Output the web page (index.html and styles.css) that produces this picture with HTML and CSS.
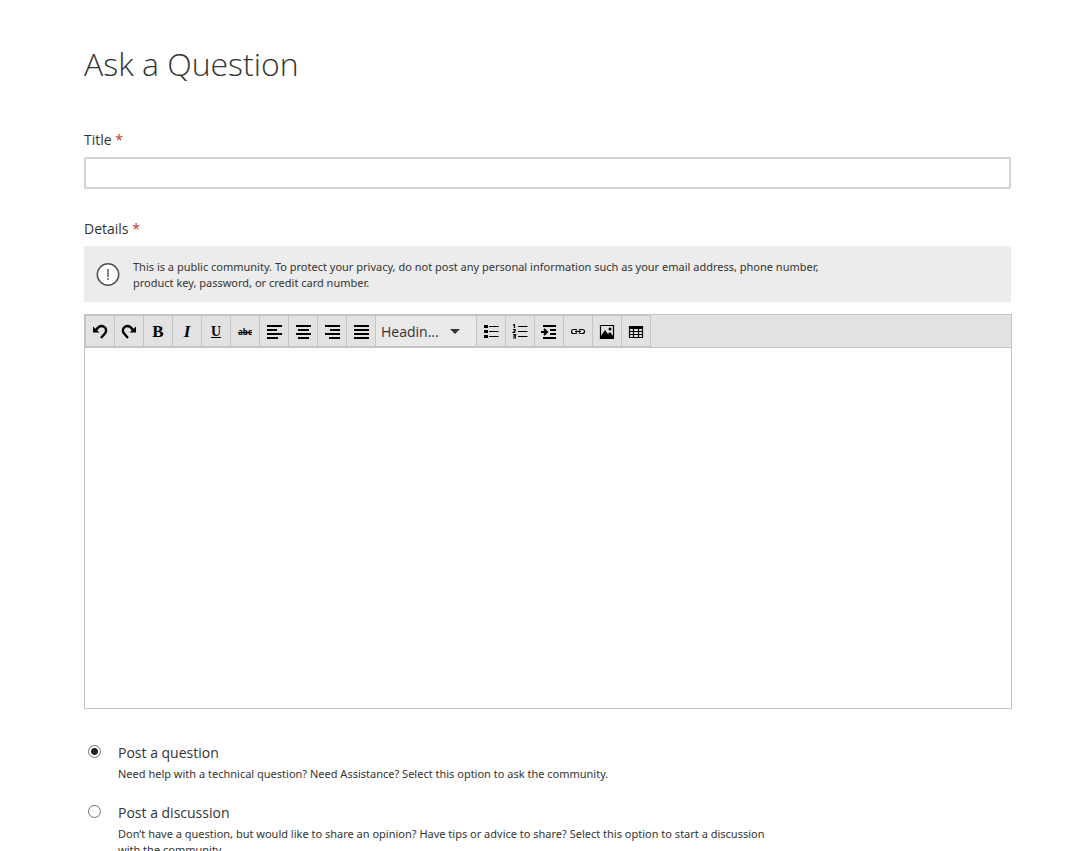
FILE: index.html
```html
<!DOCTYPE html>
<html lang="en">
<head>
    <meta charset="UTF-8">
    <meta name="viewport" content="width=device-width, initial-scale=1.0">
    <title>Ask a Question</title>
    <link rel="stylesheet" href="styles.css">
</head>
<body>
  <main class="page">
    <h1>Ask a Question</h1>
    <form>
      <div class="field">
        <label for="title">Title <span class="required">*</span></label>
        <input type="text" id="title" class="title-input" required>
      </div>
      <div class="field">
        <label for="details">Details <span class="required">*</span></label>
        <div class="notice">
          <svg class="notice-icon" viewBox="0 0 24 24" width="24" height="24">
            <circle cx="12" cy="11.5" r="10.700" fill="#fff" stroke="#505050" stroke-width="1.5"/>
            <path d="M12 6v8M12 15v2" fill="none" stroke="#444" stroke-width="1.300"/>
          </svg>
          <p>This is a public community. To protect your privacy, do not post any personal information such as your email address, phone number, product key, password, or credit card number.</p>
        </div>
        <div class="editor">
          <div class="toolbar">
            <button type="button" class="tool" aria-label="Undo">
              <svg viewBox="0 0 16 16"><path d="M4 6C6.500 2.500 9.500 1.300 12 2.700C14.600 4.300 14.700 7.500 12.700 9.800L9 14" fill="none" stroke="#000" stroke-width="2.300"/><path d="M1 2.500V8.500H7.500z"/></svg>
            </button>
            <button type="button" class="tool" aria-label="Redo">
              <svg viewBox="0 0 16 16"><path d="M12 6C9.500 2.500 6.500 1.300 4 2.700C1.400 4.300 1.300 7.500 3.300 9.800L7 14" fill="none" stroke="#000" stroke-width="2.300"/><path d="M15 2.500V8.500H8.500z"/></svg>
            </button>
            <button type="button" class="tool bold">B</button>
            <button type="button" class="tool italic">I</button>
            <button type="button" class="tool underline">U</button>
            <button type="button" class="tool strike">abc</button>
            <button type="button" class="tool" aria-label="Align left">
              <svg viewBox="0 0 16 16"><path d="M1 2h15M1 6h10M1 10h15M1 14h11" stroke="#000" stroke-width="2"/></svg>
            </button>
            <button type="button" class="tool" aria-label="Align center">
              <svg viewBox="0 0 16 16"><path d="M1 2h15M3 6h11M1 10h15M3 14h11" stroke="#000" stroke-width="2"/></svg>
            </button>
            <button type="button" class="tool" aria-label="Align right">
              <svg viewBox="0 0 16 16"><path d="M1 2h15M6 6h10M1 10h15M5 14h11" stroke="#000" stroke-width="2"/></svg>
            </button>
            <button type="button" class="tool" aria-label="Justify">
              <svg viewBox="0 0 16 16"><path d="M1 2h15M1 6h15M1 10h15M1 14h15" stroke="#000" stroke-width="2"/></svg>
            </button>
            <div class="format">
              <select aria-label="Format">
                <option>Headin...</option>
                <option>Paragraph</option>
              </select>
              <svg class="arrow" viewBox="0 0 10 5" width="10" height="5"><path d="M0 0h10L5 5z" fill="#333"/></svg>
            </div>
            <button type="button" class="tool" aria-label="Bulleted list">
              <svg viewBox="0 0 16 16"><path d="M1 1h4v3H1zM1 6h4v3H1zM1 11h4v3H1z"/><path d="M6 2.500h9.500M6 7.500h9.500M6 12.500h9.500" stroke="#000"/></svg>
            </button>
            <button type="button" class="tool" aria-label="Numbered list">
              <svg viewBox="0 0 16 16"><path d="M6 2.500h9.500M6 7.500h9.500M6 12.500h9.500" stroke="#000"/><path d="M1 1.200L2.500 .500V4M1 5.500h2.200v1.200L1.200 8.500h2.300M1 10.500h2.500L2 12h1.300v2H1" fill="none" stroke="#000" stroke-width="1.200"/></svg>
            </button>
            <button type="button" class="tool" aria-label="Indent">
              <svg viewBox="0 0 16 16"><path d="M2 2h13M9 6h6M9 10h6M2 14h13" stroke="#000" stroke-width="2"/><path d="M0 8h6M3 5L6 8L3 11" fill="none" stroke="#000" stroke-width="2"/></svg>
            </button>
            <button type="button" class="tool" aria-label="Insert link">
              <svg viewBox="0 0 16 16"><path d="M7 6.500L6 5.500H3.500a2 2 0 0 0 0 4H6l1-1M9 6.500l1-1h2.500a2 2 0 0 1 0 4H10l-1-1M5 7.500h6" fill="none" stroke="#000" stroke-width="1.200"/></svg>
            </button>
            <button type="button" class="tool" aria-label="Insert image">
              <svg viewBox="0 0 16 16"><path d="M1.500 1.500h13v13h-13z" fill="none" stroke="#000" stroke-width="1.200"/><path d="M2 12L6 6L9 10L11 8L14 12V14.500H2z"/><circle cx="11" cy="5" r="1.500"/></svg>
            </button>
            <button type="button" class="tool" aria-label="Insert table">
              <svg viewBox="0 0 16 16"><path d="M1 2h14v3H1z"/><path d="M1.500 2.500h13v11h-13zM1.500 7.500h13M1.500 10.500h13M5.500 5v8M10.500 5v8" fill="none" stroke="#000" stroke-width="1.200"/></svg>
            </button>
          </div>
          <textarea id="details" class="details" required></textarea>
        </div>
      </div>
      <div class="options">
        <div class="option">
          <input type="radio" name="type" id="question" checked>
          <div class="option-text">
            <label for="question">Post a question</label>
            <p>Need help with a technical question? Need Assistance? Select this option to ask the community.</p>
          </div>
        </div>
        <div class="option">
          <input type="radio" name="type" id="discussion">
          <div class="option-text">
            <label for="discussion">Post a discussion</label>
            <p>Don’t have a question, but would like to share an opinion? Have tips or advice to share? Select this option to start a discussion with the community.</p>
          </div>
        </div>
      </div>
    </form>
  </main>
</body>
</html>
```
FILE: styles.css
```css
* {
    box-sizing: border-box;
}
html {
    scrollbar-width: none;
}
body {
    margin: 0;
    background-color: #fff;
    color: #333;
    font-family: "Open Sans", "Noto Sans", sans-serif;
    font-size: 14px;
    line-height: 20px;
}
.page {
    padding: 40px 78px 0 84px;
}
h1 {
    margin: 0 0 42px;
    font-size: 32px;
    font-weight: 300;
    line-height: 48px;
}
p {
    margin: 0;
    font-family: "Noto Sans", "Open Sans", sans-serif;
    font-size: 11px;
    line-height: 16px;
}
label {
    display: block;
}
.required {
    color: #c03030;
}
.field {
    margin-bottom: 30px;
}
.title-input {
    display: block;
    width: 100%;
    height: 32px;
    margin-top: 7px;
    padding: 4px 8px;
    border: 2px solid #d2d2d2;
    border-radius: 2px;
    font: inherit;
}
.notice {
    display: flex;
    align-items: center;
    gap: 13px;
    margin: 7px 0 12px;
    padding: 13px 12px 11px;
    background-color: #ececec;
}
.notice-icon {
    flex: none;
}
.notice p {
    max-width: 715px;
}
.editor {
    margin-right: -1px;
    border: 1px solid #c4c4c4;
}
.toolbar {
    display: flex;
    height: 33px;
    background-color: #e2e2e2;
    border-bottom: 1px solid #c4c4c4;
}
.tool {
    display: flex;
    justify-content: center;
    align-items: center;
    width: 30px;
    margin-right: -1px;
    padding: 2px 0 0;
    border: 1px solid #c4c4c4;
    background-color: #e2e2e2;
    color: #000;
    font-family: "Liberation Serif", serif;
    font-size: 16px;
    line-height: 20px;
    cursor: pointer;
}
.tool svg {
    width: 16px;
    height: 16px;
}
.bold {
    font-weight: bold;
    font-size: 17px;
}
.italic {
    font-weight: bold;
    font-style: italic;
    font-size: 17px;
}
.underline {
    font-size: 14px;
    font-weight: bold;
    text-decoration: underline;
}
.strike {
    font-family: "Open Sans", sans-serif;
    font-size: 8px;
    font-weight: bold;
    text-decoration: line-through;
}
.format {
    position: relative;
    width: 102px;
    margin-right: -1px;
    border: 1px solid #c4c4c4;
    background-color: #e9e9e9;
}
.format select {
    width: 100%;
    height: 100%;
    padding: 2px 24px 0 5px;
    border: none;
    background: none;
    color: #333;
    font: inherit;
    appearance: none;
}
.format .arrow {
    position: absolute;
    right: 16px;
    top: 13px;
    pointer-events: none;
}
.details {
    display: block;
    width: 100%;
    height: 360px;
    padding: 8px;
    border: none;
    resize: none;
    font: inherit;
}
.options {
    padding-top: 4px;
}
.option {
    display: flex;
    gap: 17px;
    margin-bottom: 21px;
}
.option input {
    flex: none;
    width: 13px;
    height: 13px;
    margin: 2px 0 0 4px;
    appearance: none;
    border: 1px solid #707070;
    border-radius: 50%;
}
.option input:checked {
    background: radial-gradient(circle, #222 0 3px, #fff 4px);
}
.option-text {
    max-width: 668px;
}
.option-text p {
    margin-top: 3px;
}
```
